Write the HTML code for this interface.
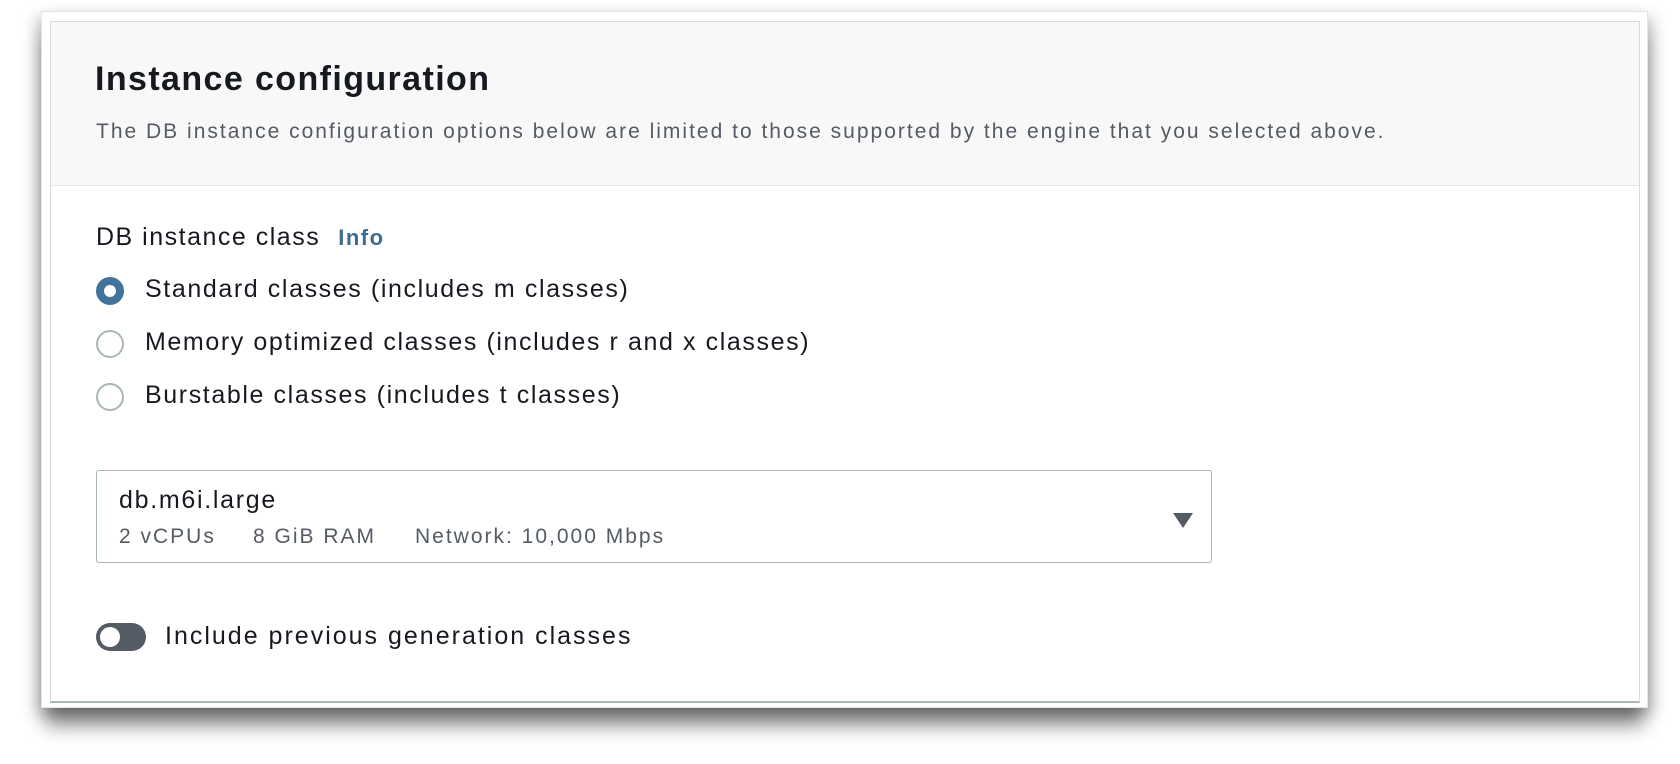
<!DOCTYPE html>
<html><head><meta charset="utf-8"><style>
*{box-sizing:border-box;margin:0;padding:0}
body{width:1680px;height:764px;background:#fff;position:relative;overflow:hidden;font-family:"Liberation Sans",sans-serif;color:#16191f}
.outer{position:absolute;left:41px;top:11px;width:1607px;height:697px;background:#fff;border:1px solid #e3e6e6;box-shadow:0 22px 18px -4px rgba(0,0,0,.42),6px 6px 14px rgba(0,0,0,.18),-6px 6px 14px rgba(0,0,0,.18)}
.card{position:absolute;left:50px;top:21px;width:1590px;height:682px;background:#fff;border:1px solid #d5dbdb;border-bottom:2px solid #aab7b8}
.hdr{position:absolute;left:0;top:0;right:0;height:164px;background:#f8f8f8;border-bottom:1px solid #e5e8e8}
.abs{position:absolute;white-space:nowrap}
h1{font-size:34px;letter-spacing:1.4px;font-weight:bold;left:44px;top:38px}
.sub{font-size:21px;letter-spacing:2.0px;color:#545b64;left:45px;top:98px}
.lab{font-size:25px;letter-spacing:1.5px;left:45px;top:201px}
.info{color:#3f6b8f;font-weight:bold;font-size:22px;letter-spacing:1.5px;margin-left:18px}
.radio{position:absolute;left:45px;width:28px;height:28px;border-radius:50%;border:2px solid #aab7b8;background:#fff}
.radio.on{border:8px solid #44739a}
.rt{font-size:25px;letter-spacing:1.6px;left:94px}
.sel{position:absolute;left:45px;top:448px;width:1116px;height:93px;border:1px solid #aab7b8;border-radius:3px}
.tri{position:absolute;left:1076px;top:42px;width:0;height:0;border-left:10px solid transparent;border-right:10px solid transparent;border-top:15px solid #545b64}
.tog{position:absolute;left:45px;top:601px;width:50px;height:28px;border-radius:14px;background:#545b64}
.tog:after{content:"";position:absolute;left:4px;top:4px;width:20px;height:20px;border-radius:50%;background:#fff}
.s2{font-size:21px;letter-spacing:2px;color:#545b64;top:54px}
</style></head><body>
<div class="outer"></div>
<div class="card">
 <div class="hdr"></div>
 <h1 class="abs">Instance configuration</h1>
 <div class="abs sub">The DB instance configuration options below are limited to those supported by the engine that you selected above.</div>
 <div class="abs lab">DB instance class<span class="info">Info</span></div>
 <div class="radio on" style="top:255px"></div>
 <div class="abs rt" style="top:253px">Standard classes (includes m classes)</div>
 <div class="radio" style="top:308px"></div>
 <div class="abs rt" style="top:306px">Memory optimized classes (includes r and x classes)</div>
 <div class="radio" style="top:361px"></div>
 <div class="abs rt" style="top:359px">Burstable classes (includes t classes)</div>
 <div class="sel">
  <div class="abs" style="left:22px;top:15px;font-size:25px;letter-spacing:1.7px">db.m6i.large</div>
  <div class="abs s2" style="left:22px">2 vCPUs</div>
  <div class="abs s2" style="left:156px">8 GiB RAM</div>
  <div class="abs s2" style="left:318px">Network: 10,000 Mbps</div>
  <div class="tri"></div>
 </div>
 <div class="tog"></div>
 <div class="abs rt" style="left:114px;top:600px;letter-spacing:2px">Include previous generation classes</div>
</div>
</body></html>
